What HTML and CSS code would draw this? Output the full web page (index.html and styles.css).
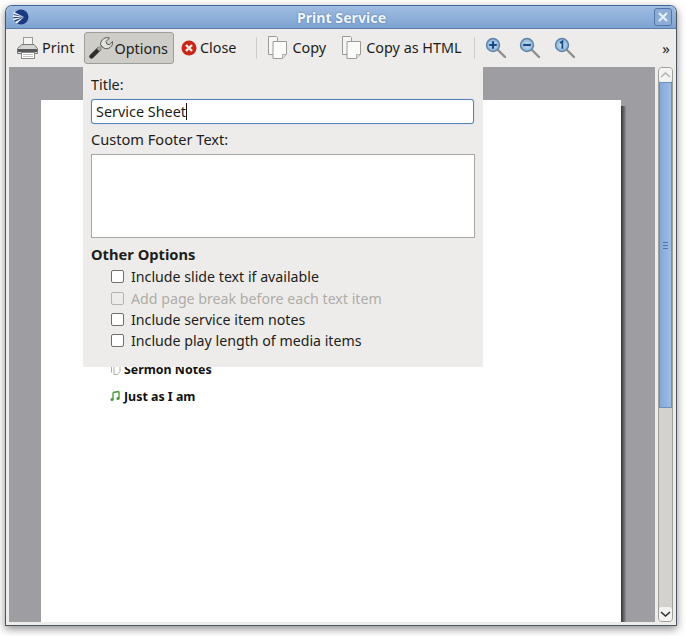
FILE: index.html
```html
<!DOCTYPE html>
<html lang="en">
<head>
  <meta charset="UTF-8">
  <title>Print Service</title>
  <link rel="stylesheet" href="styles.css">
</head>
<body>
  <div class="window">
    <div class="titlebar">
      <svg class="app-logo" width="16" height="16" viewBox="0 0 16 16">
        <circle cx="8" cy="8" r="7.5" fill="#1c3a80"/>
        <path d="M11 8 L0 2.5 L1 5 Z M11 8 L0 6 L0 8 Z M11 8 L0 9.5 L.5 11.5 Z M11 8 L2 13 L4 14.5 Z" fill="#eef3fb"/>
      </svg>
      <span class="title">Print Service</span>
      <span class="close-box">
        <svg width="10" height="10" viewBox="0 0 10 10"><path d="M1 1 L9 9 M9 1 L1 9" stroke="#eaf1f9" stroke-width="2"/></svg>
      </span>
    </div>

    <div class="toolbar">
      <div class="tool">
        <svg width="24" height="24" viewBox="0 0 24 24">
          <rect x="8.5" y="1.5" width="9" height="8" fill="#f4f4f2" stroke="#9a9a96"/>
          <path d="M7 8.5h12l3.5 4v5h-20v-5z" fill="#d5d6d2" stroke="#77787a"/>
          <rect x="3" y="13" width="19" height="3" fill="#55575a"/>
          <rect x="6.5" y="16.5" width="13" height="6" fill="#fff" stroke="#8a8a86"/>
          <path d="M8 18.5h10M8 20.5h10" stroke="#c4c4c0"/>
        </svg>
        <span>Print</span>
      </div>
      <div class="tool active">
        <svg width="24" height="24" viewBox="0 0 24 24">
          <path d="M2.5 20.5 L10 13" stroke="#2e2e2c" stroke-width="4.4" stroke-linecap="round"/>
          <path d="M9 14 L14 9" stroke="#a5a6a2" stroke-width="3.6"/>
          <path d="M11.5 8.5 C11.5 3.5 16.5 0.5 20.5 2 L17 5.5 L18 8 L20.5 8.8 L23.5 5.5 C24.5 10 19.5 14.5 14.5 12 Z" fill="#e2e3df" stroke="#55564f"/>
        </svg>
        <span>Options</span>
      </div>
      <div class="tool close-tool">
        <svg width="16" height="16" viewBox="0 0 16 16">
          <circle cx="8" cy="8" r="7.5" fill="#c8281c"/>
          <path d="M5 5 L11 11 M11 5 L5 11" stroke="#fbeadf" stroke-width="2.4"/>
        </svg>
        <span>Close</span>
      </div>
      <div class="sep"></div>
      <div class="tool copy-tool">
        <svg width="22" height="24" viewBox="0 0 22 24">
          <path d="M1.5 .5h8l1 1v17h-9z" fill="#f6f6f4" stroke="#9a9a96"/>
          <path d="M6 5.5h13.5v13l-4 4H6z" fill="#fbfbfa" stroke="#9a9a96"/>
          <path d="M15.5 22.5v-4h4" fill="#dcdcd9" stroke="#b0b0ac"/>
        </svg>
        <span>Copy</span>
      </div>
      <div class="tool">
        <svg width="22" height="24" viewBox="0 0 22 24">
          <path d="M1.5 .5h8l1 1v17h-9z" fill="#f6f6f4" stroke="#9a9a96"/>
          <path d="M6 5.5h13.5v13l-4 4H6z" fill="#fbfbfa" stroke="#9a9a96"/>
          <path d="M15.5 22.5v-4h4" fill="#dcdcd9" stroke="#b0b0ac"/>
        </svg>
        <span>Copy as HTML</span>
      </div>
      <div class="sep"></div>
      <div class="zoom-group">
        <svg width="22" height="22" viewBox="0 0 22 22">
          <defs>
            <radialGradient id="lens">
              <stop offset="0" stop-color="#d5e8f6"/>
              <stop offset="1" stop-color="#86aed2"/>
            </radialGradient>
          </defs>
          <path d="M12 12 L20 20" stroke="#8d8f8b" stroke-width="2.4" stroke-linecap="round"/>
          <circle cx="8" cy="8" r="6.5" fill="url(#lens)" stroke="#5f83a8" stroke-width="1.4"/>
          <path d="M4.2 8h7.6M8 4.2v7.6" stroke="#174a84" stroke-width="2.2"/>
        </svg>
        <svg width="22" height="22" viewBox="0 0 22 22">
          <path d="M12 12 L20 20" stroke="#8d8f8b" stroke-width="2.4" stroke-linecap="round"/>
          <circle cx="8" cy="8" r="6.5" fill="url(#lens)" stroke="#5f83a8" stroke-width="1.4"/>
          <path d="M4.2 8h7.6" stroke="#174a84" stroke-width="2.2"/>
        </svg>
        <svg width="22" height="22" viewBox="0 0 22 22">
          <path d="M12 12 L20 20" stroke="#8d8f8b" stroke-width="2.4" stroke-linecap="round"/>
          <circle cx="8" cy="8" r="6.5" fill="url(#lens)" stroke="#5f83a8" stroke-width="1.4"/>
          <path d="M6 6l2.4-1.6v7.4" stroke="#174a84" stroke-width="1.8" fill="none"/>
        </svg>
      </div>
      <span class="more">»</span>
    </div>

    <div class="content">
      <div class="preview">
        <div class="page">
          <div class="service-item notes-item">
            <svg width="11" height="12" viewBox="0 0 11 12"><path d="M1.5 .5v9M4 .5h6v8l-2.5 3H4z" fill="#fff" stroke="#aaa"/></svg>
            <span>Sermon Notes</span>
          </div>
          <div class="service-item">
            <svg width="11" height="12" viewBox="0 0 11 12"><path d="M3 2.5v7M9 1.5v7M3 2.5l6-1" stroke="#3c9a2a" stroke-width="1.3" fill="none"/><circle cx="2" cy="9.5" r="1.5" fill="#3c9a2a"/><circle cx="8" cy="8.5" r="1.5" fill="#3c9a2a"/></svg>
            <span>Just as I am</span>
          </div>
        </div>
        <div class="options-panel">
          <label class="field-label">Title:</label>
          <div class="title-input"><span>Service Sheet</span><i class="caret"></i></div>
          <label class="field-label footer-label">Custom Footer Text:</label>
          <div class="footer-text"></div>
          <div class="other-head">Other Options</div>
          <div class="check-row"><i class="check"></i><span>Include slide text if available</span></div>
          <div class="check-row disabled"><i class="check"></i><span>Add page break before each text item</span></div>
          <div class="check-row"><i class="check"></i><span>Include service item notes</span></div>
          <div class="check-row"><i class="check"></i><span>Include play length of media items</span></div>
        </div>
      </div>
      <div class="scrollbar">
        <div class="arrow up"><svg width="11" height="6" viewBox="0 0 11 6"><path d="M1 5 L5.5 1 L10 5" stroke="#b5b5b0" stroke-width="1.6" fill="none"/></svg></div>
        <div class="thumb"><span class="grip"></span></div>
        <div class="arrow down"><svg width="11" height="6" viewBox="0 0 11 6"><path d="M1 1 L5.5 5 L10 1" stroke="#333" stroke-width="1.6" fill="none"/></svg></div>
      </div>
    </div>
  </div>
</body>
</html>
```
FILE: styles.css
```css
html, body {
  margin: 0;
  height: 100%;
}
body {
  background-color: #fff;
  padding: 5px 9px 10px 5px;
  box-sizing: border-box;
  font-family: "Noto Sans", sans-serif;
  font-size: 14.4px;
  color: #1d1d1b;
}

/* window frame */
.window {
  height: 100%;
  display: flex;
  flex-direction: column;
  background-color: #edecea;
  border: 1px solid #4b5560;
  border-top-color: #3f6596;
  border-radius: 7px 7px 0 0;
  box-shadow: 0 3px 8px rgba(0, 0, 0, .45);
  box-sizing: border-box;
}
.titlebar {
  height: 22px;
  display: flex;
  align-items: center;
  padding: 0 4px 0 7px;
  background: linear-gradient(#a0bde2, #7ea3d1);
  border-bottom: 1px solid #5b7ead;
  border-radius: 6px 6px 0 0;
}
.title {
  flex: 1;
  text-align: center;
  font-weight: bold;
  font-size: 14.2px;
  color: #f2f6fc;
  text-shadow: 0 0 2px #4a6f9e;
}
.close-box {
  width: 18px;
  height: 18px;
  box-sizing: border-box;
  display: flex;
  align-items: center;
  justify-content: center;
  border: 1px solid #4f76a7;
  border-radius: 3px;
  background-color: #8badd6;
}

/* toolbar */
.toolbar {
  height: 38px;
  display: flex;
  align-items: center;
  padding: 0 6px 0 5px;
}
.tool {
  height: 32px;
  box-sizing: border-box;
  display: flex;
  align-items: center;
  gap: 3px;
  padding: 0 4px;
}
.tool span {
  margin-top: -2px;
}
.tool.active {
  background-color: #cfcdc8;
  border: 1px solid #a09e99;
  border-radius: 3px;
  padding: 0 5px 0 4px;
  margin: 0 3px 0 6px;
  gap: 1px;
}
.tool.active span {
  margin-top: 0;
}
.close-tool {
  margin-right: 8px;
}
.copy-tool {
  margin-right: 7px;
}
.sep {
  width: 1px;
  height: 22px;
  background-color: #cfcdc9;
  margin: 0 7px 0 8px;
}
.close-tool + .sep {
  margin-right: 6px;
}
.zoom-group {
  display: flex;
  gap: 12.5px;
  padding-left: 3px;
}
.more {
  margin-left: auto;
  font-size: 15px;
}

/* preview area */
.content {
  flex: 1;
  display: flex;
  padding: 0 3px 3px 3px;
  min-height: 0;
}
.preview {
  flex: 1;
  position: relative;
  background-color: #9e9da1;
  padding: 33px 34px 0 32px;
  overflow: hidden;
}
.page {
  position: relative;
  height: 100%;
  background-color: #fff;
  padding-top: 261px;
  box-sizing: border-box;
}
/* shadow strip down the right side of the sheet */
.page::after {
  content: "";
  position: absolute;
  left: 100%;
  top: 6px;
  bottom: 0;
  width: 5px;
  background: linear-gradient(90deg, #333, #8f8e92);
}
.service-item {
  display: flex;
  align-items: center;
  gap: 3px;
  margin: 0 0 11px 69px;
  height: 16px;
  font-size: 12.4px;
  font-weight: bold;
  color: #111;
}

/* options panel over the preview */
.options-panel {
  position: absolute;
  left: 74px;
  top: 0;
  width: 400px;
  height: 300px;
  box-sizing: border-box;
  padding: 8px 8px 0 8px;
  background-color: #edecea;
}
.field-label {
  display: block;
  line-height: 19px;
}
.title-input {
  height: 25px;
  margin-top: 5px;
  box-sizing: border-box;
  border: 1px solid #5a83b5;
  border-radius: 3px;
  background-color: #fff;
  padding: 0 4px;
  display: flex;
  align-items: center;
  width: 383px;
  box-shadow: 0 0 1px #7ea3d1;
}
.caret {
  width: 1px;
  height: 17px;
  background-color: #111;
}
.footer-label {
  margin-top: 6px;
  font-size: 14.6px;
}
.footer-text {
  height: 84px;
  width: 384px;
  box-sizing: border-box;
  margin-top: 5px;
  background-color: #fff;
  border: 1px solid #a7a6a2;
}
.other-head {
  font-weight: bold;
  font-size: 14.7px;
  margin: 6px 0 2px;
  line-height: 20px;
}
.check-row {
  display: flex;
  align-items: center;
  gap: 7px;
  height: 21.4px;
  padding-left: 20px;
  font-size: 14.2px;
}
.check {
  width: 13px;
  height: 13px;
  box-sizing: border-box;
  border: 1px solid #6f6e6a;
  border-radius: 2px;
  background-color: #fff;
}
.check-row.disabled {
  color: #aeaca8;
}
.check-row.disabled .check {
  border-color: #b5b3af;
  background-color: #edecea;
}

/* scrollbar */
.scrollbar {
  width: 15px;
  margin-left: 3px;
  display: flex;
  flex-direction: column;
  background-color: #d3d2ce;
  border: 1px solid #a09f9a;
  border-radius: 4px;
  box-sizing: border-box;
}
.arrow {
  height: 14px;
  display: flex;
  align-items: center;
  justify-content: center;
  background-color: #f3f3f1;
  border-radius: 3px;
}
.thumb {
  height: 326px;
  display: flex;
  align-items: center;
  justify-content: center;
  background: linear-gradient(90deg, #84a8d8, #9fbde5);
  border: 1px solid #6c8fbd;
  box-sizing: border-box;
}
.grip {
  width: 5px;
  height: 7px;
  background: repeating-linear-gradient(#4f76a7 0 1px, transparent 1px 3px);
}
.down {
  margin-top: auto;
}
```
